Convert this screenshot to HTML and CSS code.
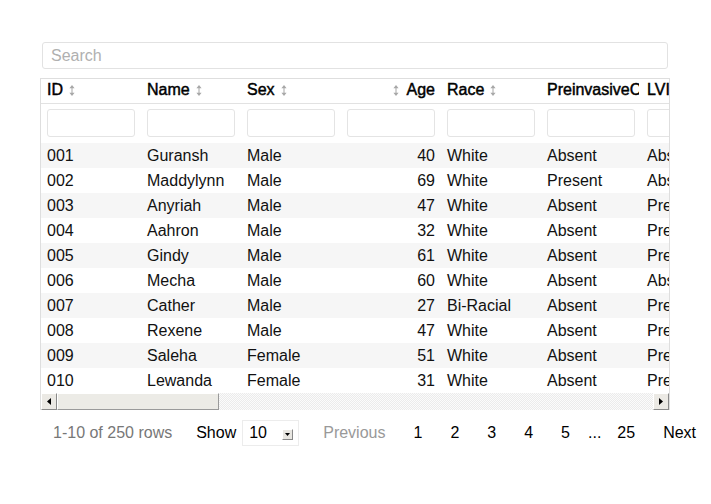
FILE: index.html
```html
<!DOCTYPE html>
<html>
<head>
<meta charset="utf-8">
<link rel="stylesheet" href="styles.css">
</head>
<body>
<div class="wrap">
  <input class="search" type="text" placeholder="Search">
  <div class="grid">
    <div class="viewport">
      <table class="tbl">
        <thead>
          <tr class="head">
            <th><span class="lbl">ID</span><svg class="sort" width="6" height="11" viewBox="0 0 6 11"><path d="M3 0L5.6 3.2H3.5V7.8H5.6L3 11L0.4 7.8H2.5V3.2H0.4Z"/></svg></th>
            <th><span class="lbl">Name</span><svg class="sort" width="6" height="11" viewBox="0 0 6 11"><path d="M3 0L5.6 3.2H3.5V7.8H5.6L3 11L0.4 7.8H2.5V3.2H0.4Z"/></svg></th>
            <th><span class="lbl">Sex</span><svg class="sort" width="6" height="11" viewBox="0 0 6 11"><path d="M3 0L5.6 3.2H3.5V7.8H5.6L3 11L0.4 7.8H2.5V3.2H0.4Z"/></svg></th>
            <th class="num"><svg class="sort before" width="6" height="11" viewBox="0 0 6 11"><path d="M3 0L5.6 3.2H3.5V7.8H5.6L3 11L0.4 7.8H2.5V3.2H0.4Z"/></svg><span class="lbl">Age</span></th>
            <th><span class="lbl">Race</span><svg class="sort" width="6" height="11" viewBox="0 0 6 11"><path d="M3 0L5.6 3.2H3.5V7.8H5.6L3 11L0.4 7.8H2.5V3.2H0.4Z"/></svg></th>
            <th class="clip"><span class="lbl">PreinvasiveComponent</span></th>
            <th><span class="lbl">LVI</span></th>
          </tr>
          <tr class="filters">
            <th><input class="flt" type="text"></th>
            <th><input class="flt" type="text"></th>
            <th><input class="flt" type="text"></th>
            <th><input class="flt" type="text"></th>
            <th><input class="flt" type="text"></th>
            <th><input class="flt" type="text"></th>
            <th><input class="flt" type="text"></th>
          </tr>
        </thead>
        <tbody>
          <tr><td>001</td><td>Guransh</td><td>Male</td><td class="num">40</td><td>White</td><td>Absent</td><td>Absent</td></tr>
          <tr><td>002</td><td>Maddylynn</td><td>Male</td><td class="num">69</td><td>White</td><td>Present</td><td>Absent</td></tr>
          <tr><td>003</td><td>Anyriah</td><td>Male</td><td class="num">47</td><td>White</td><td>Absent</td><td>Present</td></tr>
          <tr><td>004</td><td>Aahron</td><td>Male</td><td class="num">32</td><td>White</td><td>Absent</td><td>Present</td></tr>
          <tr><td>005</td><td>Gindy</td><td>Male</td><td class="num">61</td><td>White</td><td>Absent</td><td>Present</td></tr>
          <tr><td>006</td><td>Mecha</td><td>Male</td><td class="num">60</td><td>White</td><td>Absent</td><td>Absent</td></tr>
          <tr><td>007</td><td>Cather</td><td>Male</td><td class="num">27</td><td>Bi-Racial</td><td>Absent</td><td>Present</td></tr>
          <tr><td>008</td><td>Rexene</td><td>Male</td><td class="num">47</td><td>White</td><td>Absent</td><td>Present</td></tr>
          <tr><td>009</td><td>Saleha</td><td>Female</td><td class="num">51</td><td>White</td><td>Absent</td><td>Present</td></tr>
          <tr><td>010</td><td>Lewanda</td><td>Female</td><td class="num">31</td><td>White</td><td>Absent</td><td>Present</td></tr>
        </tbody>
      </table>
    </div>
    <div class="hscroll">
      <div class="sbtn"><svg width="4" height="7" viewBox="0 0 4 7"><path d="M4 0V7L0 3.5Z"/></svg></div>
      <div class="thumb"></div>
      <div class="track"></div>
      <div class="sbtn"><svg width="4" height="7" viewBox="0 0 4 7"><path d="M0 0V7L4 3.5Z"/></svg></div>
    </div>
  </div>
  <div class="pager">
    <span class="info">1-10 of 250 rows</span>
    <span class="show">Show</span>
    <div class="select"><span class="sval">10</span><span class="sarrow"><svg width="5" height="3" viewBox="0 0 5 3"><path d="M0 0H5L2.5 3Z"/></svg></span></div>
    <span class="pg prev">Previous</span>
    <span class="pg">1</span>
    <span class="pg">2</span>
    <span class="pg">3</span>
    <span class="pg">4</span>
    <span class="pg">5</span>
    <span class="pg dots">...</span>
    <span class="pg">25</span>
    <span class="pg">Next</span>
  </div>
</div>
</body>
</html>
```

FILE: styles.css
```css
* { box-sizing: border-box; }
html, body { margin: 0; padding: 0; background: #fff; }
body {
  font-family: "Liberation Sans", Arial, sans-serif;
  font-size: 16px;
  color: #111;
}
.wrap {
  margin: 42px 0 0 40px;
  width: 630px;
}
.search {
  display: block;
  width: 626px;
  height: 27px;
  margin: 0 2px 9px 2px;
  border: 1px solid #e2e2e2;
  border-radius: 3px;
  padding: 0 8px;
  font-family: inherit;
  font-size: 16px;
  color: #111;
  outline: none;
}
.search::placeholder { color: #b0b0b0; }
.grid {
  border: 1px solid #dedede;
  border-bottom: none;
}
.viewport {
  width: 628px;
  overflow: hidden;
}
.tbl {
  border-collapse: collapse;
  table-layout: fixed;
  width: 700px;
}
.tbl th, .tbl td {
  width: 100px;
  padding: 0 6px;
  text-align: left;
  white-space: nowrap;
  overflow: hidden;
}
.head th {
  height: 24px;
  padding-bottom: 1px;
  border-bottom: 1px solid #e2e2e2;
  font-weight: normal;
  -webkit-text-stroke: 0.45px #000;
  color: #000;
  vertical-align: middle;
}
.head th.clip { padding-right: 0; }
.clip .lbl {
  display: inline-block;
  max-width: 92px;
  overflow: hidden;
  vertical-align: top;
}
.tbl .num { text-align: right; }
.sort {
  fill: #a8a8a8;
  margin-left: 6px;
  vertical-align: -1px;
}
.sort.before { margin-left: 0; margin-right: 8px; }
.filters th {
  height: 40px;
  vertical-align: middle;
}
.flt {
  display: block;
  width: 88px;
  height: 28px;
  border: 1px solid #e4e4e4;
  border-radius: 3px;
  background: #fff;
  outline: none;
}
.tbl tbody td {
  height: 25px;
  vertical-align: middle;
  color: #111;
}
.tbl tbody tr:nth-child(odd) td { background: #f6f6f6; }
.hscroll {
  display: flex;
  height: 17px;
  width: 628px;
}
.sbtn {
  width: 16px;
  height: 17px;
  background: #ebe9e4;
  border-top: 1px solid #fff;
  border-left: 1px solid #fff;
  border-right: 1px solid #8a8a8a;
  border-bottom: 1px solid #8a8a8a;
  display: flex;
  align-items: center;
  justify-content: center;
  fill: #000;
}
.thumb {
  width: 162px;
  height: 17px;
  background: #ecebe6;
  border-top: 1px solid #fff;
  border-left: 1px solid #fff;
  border-right: 1px solid #9a9a9a;
  border-bottom: 1px solid #9a9a9a;
}
.track {
  flex: 1;
  height: 17px;
  background: repeating-conic-gradient(#ebebeb 0 25%, #fbfbfb 0 50%) 0 0 / 2px 2px;
}
.pager {
  display: flex;
  align-items: center;
  height: 26px;
  margin-top: 10px;
  white-space: nowrap;
}
.pager > * { flex-shrink: 0; }
.info { color: #777; margin-left: 13px; }
.show { color: #000; margin-left: 24px; }
.select {
  display: flex;
  align-items: center;
  width: 57px;
  height: 26px;
  margin-left: 6px;
  border: 1px solid #ececec;
  padding-left: 6px;
}
.sval { color: #000; width: 33px; }
.sarrow {
  width: 11px;
  height: 11px;
  background: #e8e6e1;
  border-top: 1px solid #fff;
  border-left: 1px solid #fff;
  border-right: 1px solid #888;
  border-bottom: 1px solid #888;
  display: flex;
  align-items: center;
  justify-content: center;
  fill: #000;
  margin-top: 2px;
}
.pg { padding: 0 14px; color: #000; }
.prev { color: #999; margin-left: 10px; }
.dots { padding: 0 2px 0 4px; }
```
